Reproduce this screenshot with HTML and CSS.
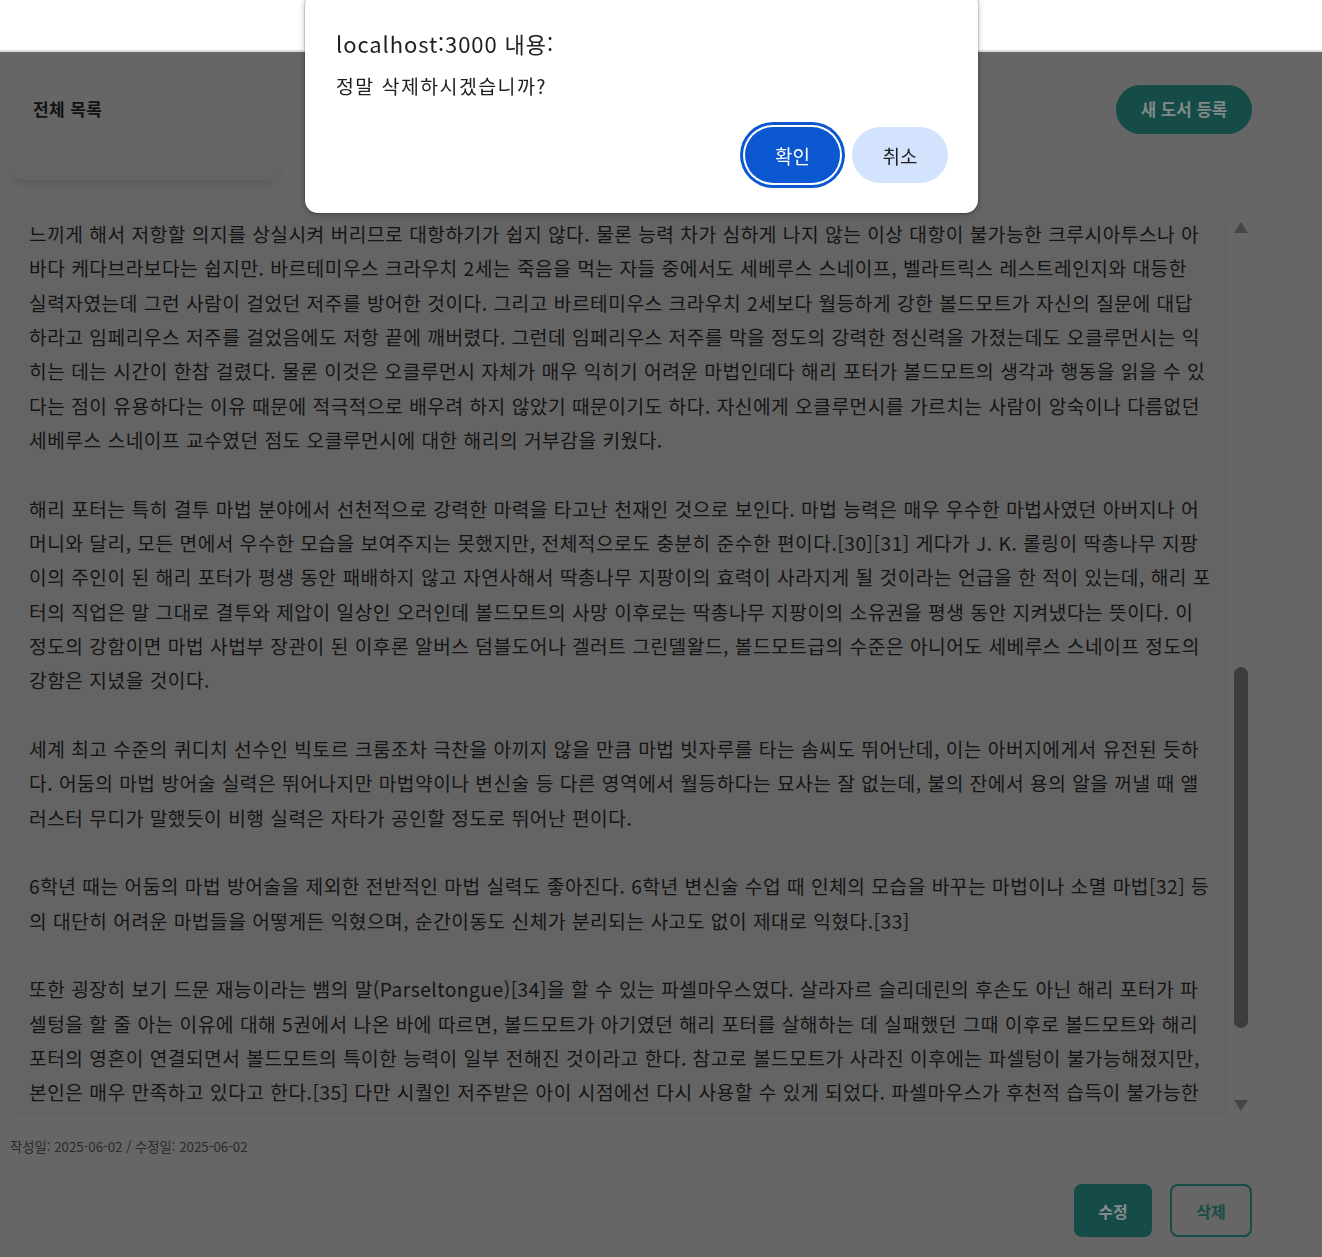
FILE: index.html
```html
<!DOCTYPE html>
<html lang="ko">
<head>
<meta charset="utf-8">
<title>도서 상세</title>
<link rel="stylesheet" href="styles.css">
</head>
<body>
<div class="topbar"></div>
<div class="page">
  <header class="header">
    <h1 class="title">전체 목록</h1>
    <button class="btn-new">새 도서 등록</button>
  </header>
  <div class="peek"></div>
  <section class="content">
    <div class="text">느끼게 해서 저항할 의지를 상실시켜 버리므로 대항하기가 쉽지 않다. 물론 능력 차가 심하게 나지 않는 이상 대항이 불가능한 크루시아투스나 아
바다 케다브라보다는 쉽지만. 바르테미우스 크라우치 2세는 죽음을 먹는 자들 중에서도 세베루스 스네이프, 벨라트릭스 레스트레인지와 대등한
실력자였는데 그런 사람이 걸었던 저주를 방어한 것이다. 그리고 바르테미우스 크라우치 2세보다 월등하게 강한 볼드모트가 자신의 질문에 대답
하라고 임페리우스 저주를 걸었음에도 저항 끝에 깨버렸다. 그런데 임페리우스 저주를 막을 정도의 강력한 정신력을 가졌는데도 오클루먼시는 익
히는 데는 시간이 한참 걸렸다. 물론 이것은 오클루먼시 자체가 매우 익히기 어려운 마법인데다 해리 포터가 볼드모트의 생각과 행동을 읽을 수 있
다는 점이 유용하다는 이유 때문에 적극적으로 배우려 하지 않았기 때문이기도 하다. 자신에게 오클루먼시를 가르치는 사람이 앙숙이나 다름없던
세베루스 스네이프 교수였던 점도 오클루먼시에 대한 해리의 거부감을 키웠다.

해리 포터는 특히 결투 마법 분야에서 선천적으로 강력한 마력을 타고난 천재인 것으로 보인다. 마법 능력은 매우 우수한 마법사였던 아버지나 어
머니와 달리, 모든 면에서 우수한 모습을 보여주지는 못했지만, 전체적으로도 충분히 준수한 편이다.[30][31] 게다가 J. K. 롤링이 딱총나무 지팡
이의 주인이 된 해리 포터가 평생 동안 패배하지 않고 자연사해서 딱총나무 지팡이의 효력이 사라지게 될 것이라는 언급을 한 적이 있는데, 해리 포
터의 직업은 말 그대로 결투와 제압이 일상인 오러인데 볼드모트의 사망 이후로는 딱총나무 지팡이의 소유권을 평생 동안 지켜냈다는 뜻이다. 이
정도의 강함이면 마법 사법부 장관이 된 이후론 알버스 덤블도어나 겔러트 그린델왈드, 볼드모트급의 수준은 아니어도 세베루스 스네이프 정도의
강함은 지녔을 것이다.

세계 최고 수준의 퀴디치 선수인 빅토르 크룸조차 극찬을 아끼지 않을 만큼 마법 빗자루를 타는 솜씨도 뛰어난데, 이는 아버지에게서 유전된 듯하
다. 어둠의 마법 방어술 실력은 뛰어나지만 마법약이나 변신술 등 다른 영역에서 월등하다는 묘사는 잘 없는데, 불의 잔에서 용의 알을 꺼낼 때 앨
러스터 무디가 말했듯이 비행 실력은 자타가 공인할 정도로 뛰어난 편이다.

6학년 때는 어둠의 마법 방어술을 제외한 전반적인 마법 실력도 좋아진다. 6학년 변신술 수업 때 인체의 모습을 바꾸는 마법이나 소멸 마법[32] 등
의 대단히 어려운 마법들을 어떻게든 익혔으며, 순간이동도 신체가 분리되는 사고도 없이 제대로 익혔다.[33]

또한 굉장히 보기 드문 재능이라는 뱀의 말(Parseltongue)[34]을 할 수 있는 파셀마우스였다. 살라자르 슬리데린의 후손도 아닌 해리 포터가 파
셀텅을 할 줄 아는 이유에 대해 5권에서 나온 바에 따르면, 볼드모트가 아기였던 해리 포터를 살해하는 데 실패했던 그때 이후로 볼드모트와 해리
포터의 영혼이 연결되면서 볼드모트의 특이한 능력이 일부 전해진 것이라고 한다. 참고로 볼드모트가 사라진 이후에는 파셀텅이 불가능해졌지만,
본인은 매우 만족하고 있다고 한다.[35] 다만 시퀄인 저주받은 아이 시점에선 다시 사용할 수 있게 되었다. 파셀마우스가 후천적 습득이 불가능한</div>
    <div class="scrollbar">
      <span class="arrow-up"></span>
      <span class="thumb"></span>
      <span class="arrow-down"></span>
    </div>
  </section>
  <p class="dates">작성일: 2025-06-02 / 수정일: 2025-06-02</p>
  <div class="actions">
    <button class="btn-edit">수정</button>
    <button class="btn-delete">삭제</button>
  </div>
</div>

<div class="dialog" role="alertdialog">
  <div class="dialog-title">localhost:3000 내용:</div>
  <div class="dialog-msg">정말 삭제하시겠습니까?</div>
  <div class="dialog-buttons">
    <button class="dlg-ok">확인</button>
    <button class="dlg-cancel">취소</button>
  </div>
</div>
</body>
</html>
```

FILE: styles.css
```css
* { box-sizing: border-box; }
html, body { margin: 0; padding: 0; }
body {
  font-family: "Noto Sans CJK KR", "Noto Sans", sans-serif;
  background: #666666;
  width: 1322px;
  height: 1257px;
  overflow: hidden;
}
button { font-family: inherit; cursor: pointer; }

.topbar {
  height: 52px;
  background: #ffffff;
  border-bottom: 2px solid #dcdcdc;
}

.page {
  background: #666666;
  padding: 0 70px 0 10px;
  display: flex;
  flex-direction: column;
}

.header {
  height: 113px;
  display: flex;
  align-items: center;
  justify-content: space-between;
  padding-left: 23px;
  position: relative;
  z-index: 2;
  background: #666666;
}
.title {
  margin: 0;
  font-size: 17px;
  letter-spacing: 0.4px;
  font-weight: 700;
  color: #121212;
  line-height: 1;
}
.btn-new {
  width: 136px;
  height: 49px;
  border: none;
  border-radius: 25px;
  background: #164c47;
  color: #7f8a88;
  font-size: 16.8px;
  font-weight: 700;
  margin-top: 1px;
}

.peek {
  width: 270px;
  height: 15px;
  border-radius: 0 0 14px 14px;
  background: #646464;
  box-shadow: 0 4px 10px rgba(0, 0, 0, 0.10);
  position: relative;
  z-index: 1;
}

.content {
  margin-top: 37px;
  height: 899px;
  display: flex;
  border-radius: 8px;
  overflow: hidden;
}
.text {
  flex: 1;
  background: #646464;
  padding-left: 19px;
  white-space: pre;
  font-size: 19.2px;
  letter-spacing: 0.5px;
  line-height: 34.33px;
  color: #141414;
  overflow: hidden;
  border-radius: 8px 0 0 8px;
}
.scrollbar {
  width: 23px;
  background: #666666;
  display: flex;
  flex-direction: column;
  align-items: center;
  padding-left: 1px;
}
.arrow-up {
  margin-top: 5px;
  width: 0;
  height: 0;
  border-left: 7px solid transparent;
  border-right: 7px solid transparent;
  border-bottom: 11px solid #464646;
}
.thumb {
  margin-top: 434px;
  width: 14px;
  height: 361px;
  border-radius: 7px;
  background: #3d3d3d;
}
.arrow-down {
  margin-top: 72px;
  width: 0;
  height: 0;
  border-left: 7px solid transparent;
  border-right: 7px solid transparent;
  border-top: 11px solid #464646;
}

.dates {
  margin: 20px 0 0 0;
  font-size: 13.3px;
  line-height: 22px;
  color: #2a2a2a;
}

.actions {
  margin-top: 26px;
  display: flex;
  justify-content: flex-end;
  gap: 18px;
}
.btn-edit, .btn-delete {
  height: 53px;
  border-radius: 8px;
  font-size: 16px;
  font-weight: 700;
}
.btn-edit {
  width: 78px;
  border: none;
  background: #164c47;
  color: #858d8c;
}
.btn-delete {
  width: 82px;
  background: transparent;
  border: 2px solid #164c47;
  color: #164c47;
}

/* Browser confirm dialog, laid over the dimmed page */
.dialog {
  position: fixed;
  left: 305px;
  top: -8px;
  width: 673px;
  height: 221px;
  background: #ffffff;
  border-radius: 13px;
  box-shadow: 0 0 0 1px rgba(0, 0, 0, 0.12), 0 2px 6px rgba(0, 0, 0, 0.28);
  padding: 37px 30px 30px 31px;
  display: flex;
  flex-direction: column;
  z-index: 10;
}
.dialog-title {
  font-size: 22px;
  letter-spacing: 0.9px;
  line-height: 28px;
  color: #1f1f1f;
}
.dialog-msg {
  margin-top: 16px;
  font-size: 19.5px;
  letter-spacing: 1.4px;
  line-height: 26px;
  color: #1f1f1f;
}
.dialog-buttons {
  margin-top: auto;
  display: flex;
  justify-content: flex-end;
  gap: 12px;
}
.dlg-ok, .dlg-cancel {
  height: 56px;
  border: none;
  border-radius: 28px;
  font-size: 19px;
}
.dlg-ok {
  width: 95px;
  background: #0b57d0;
  color: #ffffff;
  box-shadow: 0 0 0 2px #ffffff, 0 0 0 5px #0b57d0;
}
.dlg-cancel {
  width: 96px;
  background: #d3e3fd;
  color: #1f1f1f;
}
```
